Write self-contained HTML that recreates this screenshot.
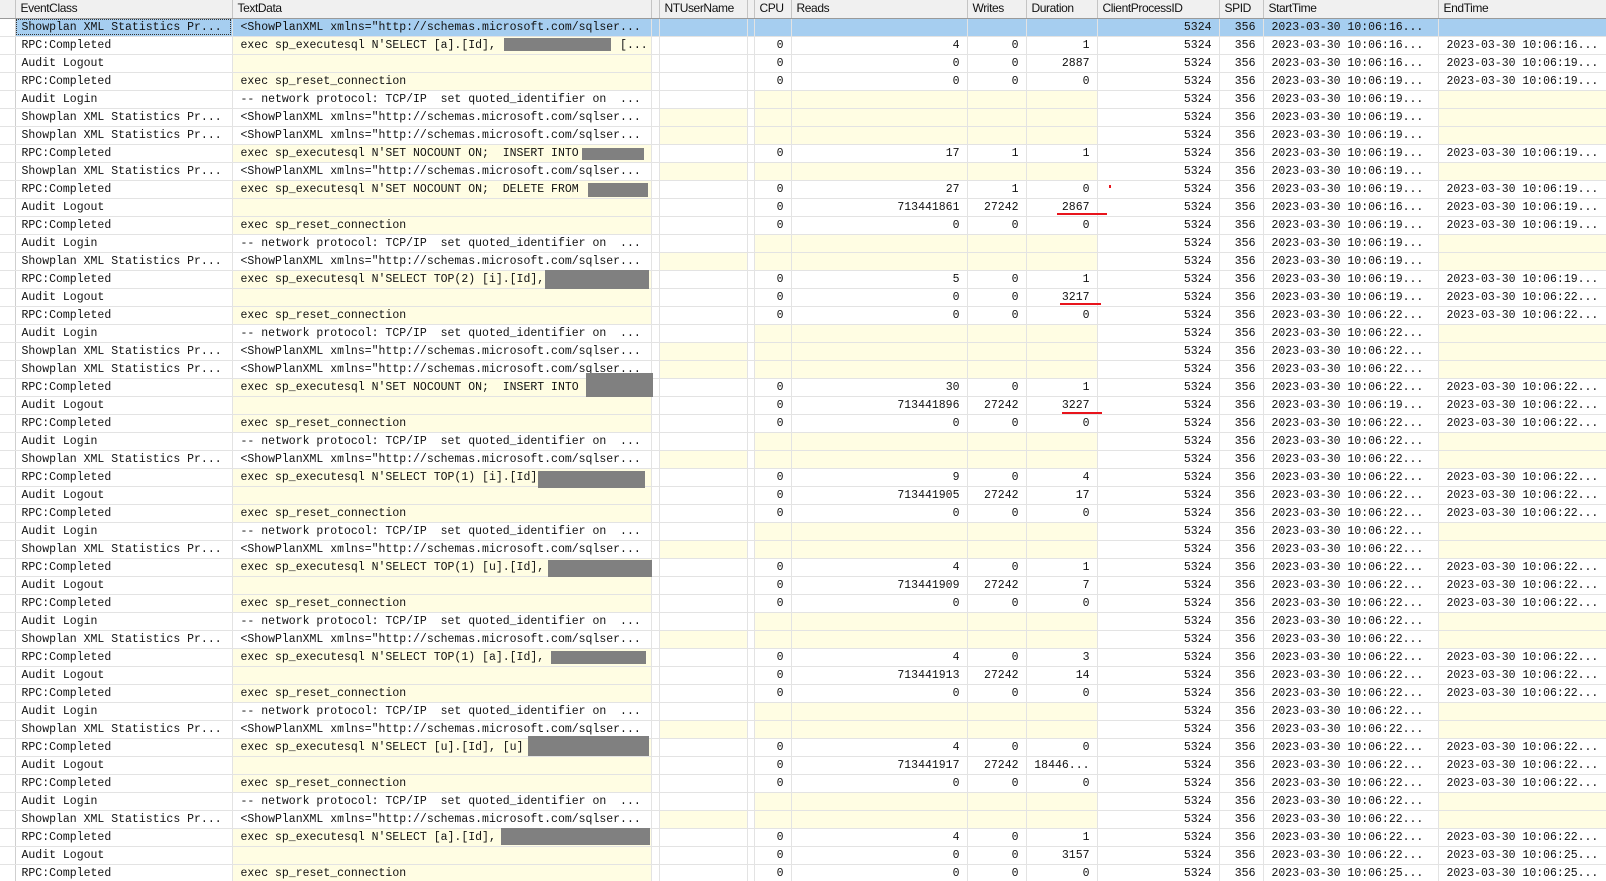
<!DOCTYPE html>
<html><head><meta charset="utf-8">
<style>
html,body{margin:0;padding:0;background:#fff;width:1606px;height:881px;overflow:hidden;position:relative}
table{border-collapse:collapse;table-layout:fixed;position:absolute;left:0;top:0;width:1606px}
td{height:17px;padding:0 0 0 6px;border-right:1px solid #e3e3e3;border-bottom:1px solid #e3e3e3;font:11.5px "Liberation Mono",monospace;color:#111;white-space:pre;overflow:hidden;text-overflow:clip;line-height:17px;box-sizing:border-box}
td:first-child{border-right:1px solid #cfcfcf;padding:0}
td.t{padding-left:8px}
td.n{text-align:right;padding:0 7px 0 0}
td.d{padding-left:8px}
td.y{background:#fffde3}
tr.h td{height:18px;background:#f0f0f0;border-right:1px solid #c4c4c4;border-bottom:1px solid #9a9a9a;font:12px "Liberation Sans",sans-serif;letter-spacing:-0.4px;padding-left:5px;line-height:17px}
tr.sel td{background:#a6cef0}
tr.sel td:first-child{background:#fff}
tr.sel td.f{outline:1px dotted #333;outline-offset:-2px}
.b{position:absolute;background:#808080}
.r{position:absolute;background:#e8141c}
</style></head><body>
<table>
<colgroup><col style="width:15px"><col style="width:217px"><col style="width:419px"><col style="width:8px"><col style="width:88px"><col style="width:7px"><col style="width:37px"><col style="width:176px"><col style="width:59px"><col style="width:71px"><col style="width:122px"><col style="width:44px"><col style="width:175px"><col style="width:168px"></colgroup>
<tr class="h"><td></td><td>EventClass</td><td>TextData</td><td></td><td>NTUserName</td><td></td><td>CPU</td><td>Reads</td><td>Writes</td><td>Duration</td><td>ClientProcessID</td><td>SPID</td><td>StartTime</td><td>EndTime</td></tr>
<tr class="sel"><td></td><td class="f">Showplan XML Statistics Pr...</td><td class="t">&lt;ShowPlanXML xmlns="http://schemas.microsoft.com/sqlser...</td><td></td><td></td><td></td><td></td><td></td><td></td><td></td><td class="n">5324</td><td class="n">356</td><td class="d">2023-03-30 10:06:16...</td><td></td></tr>
<tr><td></td><td>RPC:Completed</td><td class="t y">exec sp_executesql N'SELECT [a].[Id],                  [...</td><td></td><td></td><td></td><td class="n">0</td><td class="n">4</td><td class="n">0</td><td class="n">1</td><td class="n">5324</td><td class="n">356</td><td class="d">2023-03-30 10:06:16...</td><td class="d">2023-03-30 10:06:16...</td></tr>
<tr><td></td><td>Audit Logout</td><td class="t y"></td><td></td><td></td><td></td><td class="n">0</td><td class="n">0</td><td class="n">0</td><td class="n">2887</td><td class="n">5324</td><td class="n">356</td><td class="d">2023-03-30 10:06:16...</td><td class="d">2023-03-30 10:06:19...</td></tr>
<tr><td></td><td>RPC:Completed</td><td class="t y">exec sp_reset_connection</td><td></td><td></td><td></td><td class="n">0</td><td class="n">0</td><td class="n">0</td><td class="n">0</td><td class="n">5324</td><td class="n">356</td><td class="d">2023-03-30 10:06:19...</td><td class="d">2023-03-30 10:06:19...</td></tr>
<tr><td></td><td>Audit Login</td><td class="t">-- network protocol: TCP/IP  set quoted_identifier on  ...</td><td></td><td></td><td></td><td class="y"></td><td class="y"></td><td class="y"></td><td class="y"></td><td class="n">5324</td><td class="n">356</td><td class="d">2023-03-30 10:06:19...</td><td class="y"></td></tr>
<tr><td></td><td>Showplan XML Statistics Pr...</td><td class="t">&lt;ShowPlanXML xmlns="http://schemas.microsoft.com/sqlser...</td><td></td><td class="y"></td><td></td><td class="y"></td><td class="y"></td><td class="y"></td><td class="y"></td><td class="n">5324</td><td class="n">356</td><td class="d">2023-03-30 10:06:19...</td><td class="y"></td></tr>
<tr><td></td><td>Showplan XML Statistics Pr...</td><td class="t">&lt;ShowPlanXML xmlns="http://schemas.microsoft.com/sqlser...</td><td></td><td class="y"></td><td></td><td class="y"></td><td class="y"></td><td class="y"></td><td class="y"></td><td class="n">5324</td><td class="n">356</td><td class="d">2023-03-30 10:06:19...</td><td class="y"></td></tr>
<tr><td></td><td>RPC:Completed</td><td class="t y">exec sp_executesql N'SET NOCOUNT ON;  INSERT INTO</td><td></td><td></td><td></td><td class="n">0</td><td class="n">17</td><td class="n">1</td><td class="n">1</td><td class="n">5324</td><td class="n">356</td><td class="d">2023-03-30 10:06:19...</td><td class="d">2023-03-30 10:06:19...</td></tr>
<tr><td></td><td>Showplan XML Statistics Pr...</td><td class="t">&lt;ShowPlanXML xmlns="http://schemas.microsoft.com/sqlser...</td><td></td><td class="y"></td><td></td><td class="y"></td><td class="y"></td><td class="y"></td><td class="y"></td><td class="n">5324</td><td class="n">356</td><td class="d">2023-03-30 10:06:19...</td><td class="y"></td></tr>
<tr><td></td><td>RPC:Completed</td><td class="t y">exec sp_executesql N'SET NOCOUNT ON;  DELETE FROM</td><td></td><td></td><td></td><td class="n">0</td><td class="n">27</td><td class="n">1</td><td class="n">0</td><td class="n">5324</td><td class="n">356</td><td class="d">2023-03-30 10:06:19...</td><td class="d">2023-03-30 10:06:19...</td></tr>
<tr><td></td><td>Audit Logout</td><td class="t y"></td><td></td><td></td><td></td><td class="n">0</td><td class="n">713441861</td><td class="n">27242</td><td class="n">2867</td><td class="n">5324</td><td class="n">356</td><td class="d">2023-03-30 10:06:16...</td><td class="d">2023-03-30 10:06:19...</td></tr>
<tr><td></td><td>RPC:Completed</td><td class="t y">exec sp_reset_connection</td><td></td><td></td><td></td><td class="n">0</td><td class="n">0</td><td class="n">0</td><td class="n">0</td><td class="n">5324</td><td class="n">356</td><td class="d">2023-03-30 10:06:19...</td><td class="d">2023-03-30 10:06:19...</td></tr>
<tr><td></td><td>Audit Login</td><td class="t">-- network protocol: TCP/IP  set quoted_identifier on  ...</td><td></td><td></td><td></td><td class="y"></td><td class="y"></td><td class="y"></td><td class="y"></td><td class="n">5324</td><td class="n">356</td><td class="d">2023-03-30 10:06:19...</td><td class="y"></td></tr>
<tr><td></td><td>Showplan XML Statistics Pr...</td><td class="t">&lt;ShowPlanXML xmlns="http://schemas.microsoft.com/sqlser...</td><td></td><td class="y"></td><td></td><td class="y"></td><td class="y"></td><td class="y"></td><td class="y"></td><td class="n">5324</td><td class="n">356</td><td class="d">2023-03-30 10:06:19...</td><td class="y"></td></tr>
<tr><td></td><td>RPC:Completed</td><td class="t y">exec sp_executesql N'SELECT TOP(2) [i].[Id],</td><td></td><td></td><td></td><td class="n">0</td><td class="n">5</td><td class="n">0</td><td class="n">1</td><td class="n">5324</td><td class="n">356</td><td class="d">2023-03-30 10:06:19...</td><td class="d">2023-03-30 10:06:19...</td></tr>
<tr><td></td><td>Audit Logout</td><td class="t y"></td><td></td><td></td><td></td><td class="n">0</td><td class="n">0</td><td class="n">0</td><td class="n">3217</td><td class="n">5324</td><td class="n">356</td><td class="d">2023-03-30 10:06:19...</td><td class="d">2023-03-30 10:06:22...</td></tr>
<tr><td></td><td>RPC:Completed</td><td class="t y">exec sp_reset_connection</td><td></td><td></td><td></td><td class="n">0</td><td class="n">0</td><td class="n">0</td><td class="n">0</td><td class="n">5324</td><td class="n">356</td><td class="d">2023-03-30 10:06:22...</td><td class="d">2023-03-30 10:06:22...</td></tr>
<tr><td></td><td>Audit Login</td><td class="t">-- network protocol: TCP/IP  set quoted_identifier on  ...</td><td></td><td></td><td></td><td class="y"></td><td class="y"></td><td class="y"></td><td class="y"></td><td class="n">5324</td><td class="n">356</td><td class="d">2023-03-30 10:06:22...</td><td class="y"></td></tr>
<tr><td></td><td>Showplan XML Statistics Pr...</td><td class="t">&lt;ShowPlanXML xmlns="http://schemas.microsoft.com/sqlser...</td><td></td><td class="y"></td><td></td><td class="y"></td><td class="y"></td><td class="y"></td><td class="y"></td><td class="n">5324</td><td class="n">356</td><td class="d">2023-03-30 10:06:22...</td><td class="y"></td></tr>
<tr><td></td><td>Showplan XML Statistics Pr...</td><td class="t">&lt;ShowPlanXML xmlns="http://schemas.microsoft.com/sqlser...</td><td></td><td class="y"></td><td></td><td class="y"></td><td class="y"></td><td class="y"></td><td class="y"></td><td class="n">5324</td><td class="n">356</td><td class="d">2023-03-30 10:06:22...</td><td class="y"></td></tr>
<tr><td></td><td>RPC:Completed</td><td class="t y">exec sp_executesql N'SET NOCOUNT ON;  INSERT INTO</td><td></td><td></td><td></td><td class="n">0</td><td class="n">30</td><td class="n">0</td><td class="n">1</td><td class="n">5324</td><td class="n">356</td><td class="d">2023-03-30 10:06:22...</td><td class="d">2023-03-30 10:06:22...</td></tr>
<tr><td></td><td>Audit Logout</td><td class="t y"></td><td></td><td></td><td></td><td class="n">0</td><td class="n">713441896</td><td class="n">27242</td><td class="n">3227</td><td class="n">5324</td><td class="n">356</td><td class="d">2023-03-30 10:06:19...</td><td class="d">2023-03-30 10:06:22...</td></tr>
<tr><td></td><td>RPC:Completed</td><td class="t y">exec sp_reset_connection</td><td></td><td></td><td></td><td class="n">0</td><td class="n">0</td><td class="n">0</td><td class="n">0</td><td class="n">5324</td><td class="n">356</td><td class="d">2023-03-30 10:06:22...</td><td class="d">2023-03-30 10:06:22...</td></tr>
<tr><td></td><td>Audit Login</td><td class="t">-- network protocol: TCP/IP  set quoted_identifier on  ...</td><td></td><td></td><td></td><td class="y"></td><td class="y"></td><td class="y"></td><td class="y"></td><td class="n">5324</td><td class="n">356</td><td class="d">2023-03-30 10:06:22...</td><td class="y"></td></tr>
<tr><td></td><td>Showplan XML Statistics Pr...</td><td class="t">&lt;ShowPlanXML xmlns="http://schemas.microsoft.com/sqlser...</td><td></td><td class="y"></td><td></td><td class="y"></td><td class="y"></td><td class="y"></td><td class="y"></td><td class="n">5324</td><td class="n">356</td><td class="d">2023-03-30 10:06:22...</td><td class="y"></td></tr>
<tr><td></td><td>RPC:Completed</td><td class="t y">exec sp_executesql N'SELECT TOP(1) [i].[Id]</td><td></td><td></td><td></td><td class="n">0</td><td class="n">9</td><td class="n">0</td><td class="n">4</td><td class="n">5324</td><td class="n">356</td><td class="d">2023-03-30 10:06:22...</td><td class="d">2023-03-30 10:06:22...</td></tr>
<tr><td></td><td>Audit Logout</td><td class="t y"></td><td></td><td></td><td></td><td class="n">0</td><td class="n">713441905</td><td class="n">27242</td><td class="n">17</td><td class="n">5324</td><td class="n">356</td><td class="d">2023-03-30 10:06:22...</td><td class="d">2023-03-30 10:06:22...</td></tr>
<tr><td></td><td>RPC:Completed</td><td class="t y">exec sp_reset_connection</td><td></td><td></td><td></td><td class="n">0</td><td class="n">0</td><td class="n">0</td><td class="n">0</td><td class="n">5324</td><td class="n">356</td><td class="d">2023-03-30 10:06:22...</td><td class="d">2023-03-30 10:06:22...</td></tr>
<tr><td></td><td>Audit Login</td><td class="t">-- network protocol: TCP/IP  set quoted_identifier on  ...</td><td></td><td></td><td></td><td class="y"></td><td class="y"></td><td class="y"></td><td class="y"></td><td class="n">5324</td><td class="n">356</td><td class="d">2023-03-30 10:06:22...</td><td class="y"></td></tr>
<tr><td></td><td>Showplan XML Statistics Pr...</td><td class="t">&lt;ShowPlanXML xmlns="http://schemas.microsoft.com/sqlser...</td><td></td><td class="y"></td><td></td><td class="y"></td><td class="y"></td><td class="y"></td><td class="y"></td><td class="n">5324</td><td class="n">356</td><td class="d">2023-03-30 10:06:22...</td><td class="y"></td></tr>
<tr><td></td><td>RPC:Completed</td><td class="t y">exec sp_executesql N'SELECT TOP(1) [u].[Id],</td><td></td><td></td><td></td><td class="n">0</td><td class="n">4</td><td class="n">0</td><td class="n">1</td><td class="n">5324</td><td class="n">356</td><td class="d">2023-03-30 10:06:22...</td><td class="d">2023-03-30 10:06:22...</td></tr>
<tr><td></td><td>Audit Logout</td><td class="t y"></td><td></td><td></td><td></td><td class="n">0</td><td class="n">713441909</td><td class="n">27242</td><td class="n">7</td><td class="n">5324</td><td class="n">356</td><td class="d">2023-03-30 10:06:22...</td><td class="d">2023-03-30 10:06:22...</td></tr>
<tr><td></td><td>RPC:Completed</td><td class="t y">exec sp_reset_connection</td><td></td><td></td><td></td><td class="n">0</td><td class="n">0</td><td class="n">0</td><td class="n">0</td><td class="n">5324</td><td class="n">356</td><td class="d">2023-03-30 10:06:22...</td><td class="d">2023-03-30 10:06:22...</td></tr>
<tr><td></td><td>Audit Login</td><td class="t">-- network protocol: TCP/IP  set quoted_identifier on  ...</td><td></td><td></td><td></td><td class="y"></td><td class="y"></td><td class="y"></td><td class="y"></td><td class="n">5324</td><td class="n">356</td><td class="d">2023-03-30 10:06:22...</td><td class="y"></td></tr>
<tr><td></td><td>Showplan XML Statistics Pr...</td><td class="t">&lt;ShowPlanXML xmlns="http://schemas.microsoft.com/sqlser...</td><td></td><td class="y"></td><td></td><td class="y"></td><td class="y"></td><td class="y"></td><td class="y"></td><td class="n">5324</td><td class="n">356</td><td class="d">2023-03-30 10:06:22...</td><td class="y"></td></tr>
<tr><td></td><td>RPC:Completed</td><td class="t y">exec sp_executesql N'SELECT TOP(1) [a].[Id],</td><td></td><td></td><td></td><td class="n">0</td><td class="n">4</td><td class="n">0</td><td class="n">3</td><td class="n">5324</td><td class="n">356</td><td class="d">2023-03-30 10:06:22...</td><td class="d">2023-03-30 10:06:22...</td></tr>
<tr><td></td><td>Audit Logout</td><td class="t y"></td><td></td><td></td><td></td><td class="n">0</td><td class="n">713441913</td><td class="n">27242</td><td class="n">14</td><td class="n">5324</td><td class="n">356</td><td class="d">2023-03-30 10:06:22...</td><td class="d">2023-03-30 10:06:22...</td></tr>
<tr><td></td><td>RPC:Completed</td><td class="t y">exec sp_reset_connection</td><td></td><td></td><td></td><td class="n">0</td><td class="n">0</td><td class="n">0</td><td class="n">0</td><td class="n">5324</td><td class="n">356</td><td class="d">2023-03-30 10:06:22...</td><td class="d">2023-03-30 10:06:22...</td></tr>
<tr><td></td><td>Audit Login</td><td class="t">-- network protocol: TCP/IP  set quoted_identifier on  ...</td><td></td><td></td><td></td><td class="y"></td><td class="y"></td><td class="y"></td><td class="y"></td><td class="n">5324</td><td class="n">356</td><td class="d">2023-03-30 10:06:22...</td><td class="y"></td></tr>
<tr><td></td><td>Showplan XML Statistics Pr...</td><td class="t">&lt;ShowPlanXML xmlns="http://schemas.microsoft.com/sqlser...</td><td></td><td class="y"></td><td></td><td class="y"></td><td class="y"></td><td class="y"></td><td class="y"></td><td class="n">5324</td><td class="n">356</td><td class="d">2023-03-30 10:06:22...</td><td class="y"></td></tr>
<tr><td></td><td>RPC:Completed</td><td class="t y">exec sp_executesql N'SELECT [u].[Id], [u]</td><td></td><td></td><td></td><td class="n">0</td><td class="n">4</td><td class="n">0</td><td class="n">0</td><td class="n">5324</td><td class="n">356</td><td class="d">2023-03-30 10:06:22...</td><td class="d">2023-03-30 10:06:22...</td></tr>
<tr><td></td><td>Audit Logout</td><td class="t y"></td><td></td><td></td><td></td><td class="n">0</td><td class="n">713441917</td><td class="n">27242</td><td class="n">18446...</td><td class="n">5324</td><td class="n">356</td><td class="d">2023-03-30 10:06:22...</td><td class="d">2023-03-30 10:06:22...</td></tr>
<tr><td></td><td>RPC:Completed</td><td class="t y">exec sp_reset_connection</td><td></td><td></td><td></td><td class="n">0</td><td class="n">0</td><td class="n">0</td><td class="n">0</td><td class="n">5324</td><td class="n">356</td><td class="d">2023-03-30 10:06:22...</td><td class="d">2023-03-30 10:06:22...</td></tr>
<tr><td></td><td>Audit Login</td><td class="t">-- network protocol: TCP/IP  set quoted_identifier on  ...</td><td></td><td></td><td></td><td class="y"></td><td class="y"></td><td class="y"></td><td class="y"></td><td class="n">5324</td><td class="n">356</td><td class="d">2023-03-30 10:06:22...</td><td class="y"></td></tr>
<tr><td></td><td>Showplan XML Statistics Pr...</td><td class="t">&lt;ShowPlanXML xmlns="http://schemas.microsoft.com/sqlser...</td><td></td><td class="y"></td><td></td><td class="y"></td><td class="y"></td><td class="y"></td><td class="y"></td><td class="n">5324</td><td class="n">356</td><td class="d">2023-03-30 10:06:22...</td><td class="y"></td></tr>
<tr><td></td><td>RPC:Completed</td><td class="t y">exec sp_executesql N'SELECT [a].[Id],</td><td></td><td></td><td></td><td class="n">0</td><td class="n">4</td><td class="n">0</td><td class="n">1</td><td class="n">5324</td><td class="n">356</td><td class="d">2023-03-30 10:06:22...</td><td class="d">2023-03-30 10:06:22...</td></tr>
<tr><td></td><td>Audit Logout</td><td class="t y"></td><td></td><td></td><td></td><td class="n">0</td><td class="n">0</td><td class="n">0</td><td class="n">3157</td><td class="n">5324</td><td class="n">356</td><td class="d">2023-03-30 10:06:22...</td><td class="d">2023-03-30 10:06:25...</td></tr>
<tr><td></td><td>RPC:Completed</td><td class="t y">exec sp_reset_connection</td><td></td><td></td><td></td><td class="n">0</td><td class="n">0</td><td class="n">0</td><td class="n">0</td><td class="n">5324</td><td class="n">356</td><td class="d">2023-03-30 10:06:25...</td><td class="d">2023-03-30 10:06:25...</td></tr>
</table>
<div class="b" style="left:504px;top:38px;width:107px;height:13px"></div>
<div class="b" style="left:582px;top:148px;width:62px;height:12px"></div>
<div class="b" style="left:588px;top:183px;width:60px;height:14px"></div>
<div class="b" style="left:545px;top:270px;width:104px;height:19px"></div>
<div class="b" style="left:586px;top:373px;width:67px;height:24px"></div>
<div class="b" style="left:538px;top:471px;width:107px;height:17px"></div>
<div class="b" style="left:548px;top:560px;width:104px;height:17px"></div>
<div class="b" style="left:551px;top:651px;width:95px;height:13px"></div>
<div class="b" style="left:528px;top:736px;width:121px;height:20px"></div>
<div class="b" style="left:501px;top:828px;width:149px;height:17px"></div>
<div class="r" style="left:1057px;top:213px;width:50px;height:2px"></div>
<div class="r" style="left:1060px;top:303px;width:41px;height:2px"></div>
<div class="r" style="left:1062px;top:412px;width:40px;height:2px"></div>
<div class="r" style="left:1109px;top:185px;width:2px;height:3px"></div>
</body></html>
